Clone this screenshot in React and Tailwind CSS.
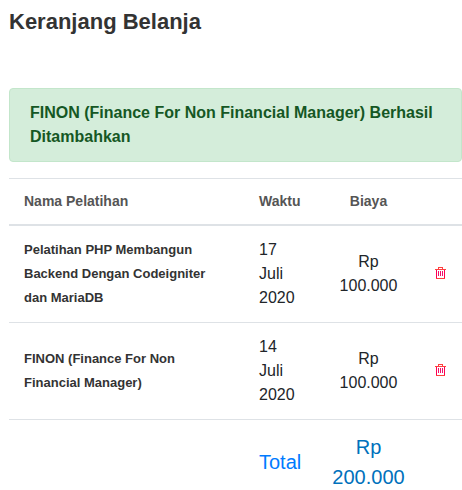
const items = [
  { name: 'Pelatihan PHP Membangun Backend Dengan Codeigniter dan MariaDB', date: '17 Juli 2020', price: 'Rp 100.000' },
  { name: 'FINON (Finance For Non Financial Manager)', date: '14 Juli 2020', price: 'Rp 100.000' },
];

function TrashIcon() {
  return (
    <svg width="11" height="14" viewBox="0 0 11 14" fill="none" aria-hidden="true">
      <path d="M1.5 3v8M9.5 3v8" stroke="#ff0050" />
      <path d="M3.5 4v5M5.5 4v5M7.5 4v5" stroke="#f0106c" />
      <path d="M0 2.5h11M1 11.5h9M3 0.5h5M3.5 0.5v2M7.5 0.5v2" stroke="#ff3f3f" />
    </svg>
  );
}

export default function App() {
  return (
    <main className="bg-white pl-[9px] pt-2 font-['Liberation_Sans',Arial,sans-serif] text-base text-[#212529]">
      <h1 className="mb-[52px] text-[22px] leading-7 font-bold text-[#333333]">Keranjang Belanja</h1>
      <div role="alert" className="mb-4 rounded border border-[#c3e6cb] bg-[#d4edda] px-5 py-3 leading-6 font-bold text-[#155724]">
        FINON (Finance For Non Financial Manager) Berhasil Ditambahkan
      </div>
      <table className="w-full table-fixed border-separate border-spacing-0">
        <colgroup>
          <col />
          <col className="w-[72px]" />
          <col className="w-[105px]" />
          <col className="w-[41px]" />
        </colgroup>
        <thead className="text-sm leading-[21px] text-[#555555]">
          <tr className="*:border-t *:border-b-2 *:border-t-[#dee2e6] *:border-b-[#dee2e6] *:px-[15px] *:py-3">
            <th scope="col" className="text-left">Nama Pelatihan</th>
            <th scope="col" className="text-left">Waktu</th>
            <th scope="col" className="text-center">Biaya</th>
            <td></td>
          </tr>
        </thead>
        <tbody className="leading-6">
          {items.map((item) => (
            <tr key={item.name} className="*:border-b *:border-[#dee2e6] *:py-3">
              <th scope="row" className="px-[15px] text-left text-[13px] leading-6 font-bold text-[#333333]">{item.name}</th>
              <td className="px-[15px]">{item.date}</td>
              <td className="px-[15px] text-center">{item.price}</td>
              <td className="pl-[14px]">
                <button type="button" aria-label={`Hapus ${item.name}`} className="block cursor-pointer">
                  <TrashIcon />
                </button>
              </td>
            </tr>
          ))}
        </tbody>
        <tfoot className="text-xl leading-[30px]">
          <tr className="*:px-[15px] *:pt-3">
            <td></td>
            <th scope="row" className="text-left font-normal text-[#007bff]">Total</th>
            <td className="text-center text-[#0071bc]">Rp 200.000</td>
            <td></td>
          </tr>
        </tfoot>
      </table>
    </main>
  );
}
